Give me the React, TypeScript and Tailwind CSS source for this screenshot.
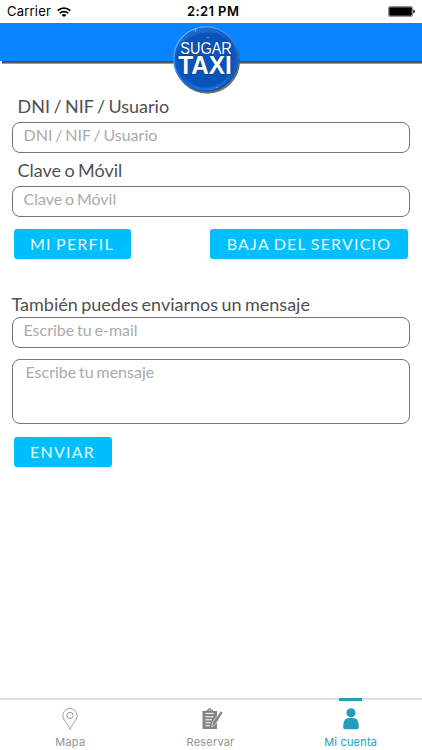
import React from 'react';

const StatusBar: React.FC = () => (
  <div className="relative flex h-[23px] items-center justify-between pl-[7px] pr-[7px] font-['Inter','Liberation_Sans',sans-serif] text-black">
    <div className="flex items-center gap-[6px]">
      <span className="w-[44px] whitespace-nowrap text-[13px] leading-[23px] tracking-[0.2px]">Carrier</span>
      <svg width="14" height="10" viewBox="0 0 14 10" fill="none" stroke="#000" strokeWidth="1.8">
        <path d="M0.7 3.7 C4.3 0.3 9.7 0.3 13.3 3.7" />
        <path d="M2.8 6.2 C5.1 4.1 8.9 4.1 11.2 6.2" />
        <path d="M4.6 8 C6 6.7 8 6.7 9.4 8 L7 10 Z" fill="#000" stroke="none" />
      </svg>
    </div>
    <span className="absolute left-[187px] whitespace-nowrap text-[13px] font-semibold leading-[23px] tracking-[0.4px]">2:21 PM</span>
    <svg width="27" height="11" viewBox="0 0 27 11">
      <rect x="0.4" y="0.4" width="24.2" height="10.2" rx="1.8" fill="#fff" stroke="#555" strokeWidth="0.7" />
      <rect x="1.2" y="1.2" width="22.6" height="8.6" rx="1" fill="#000" />
      <path d="M25.4 3.6 Q26.9 4 26.9 5.5 Q26.9 7 25.4 7.4 Z" fill="#000" />
    </svg>
  </div>
);

const Logo: React.FC = () => (
  <svg className="absolute left-[172px] top-[2px]" width="70" height="72" viewBox="0 0 70 72">
    <defs>
      <radialGradient id="ball" cx="0.5" cy="0.5" r="0.5">
        <stop offset="0" stopColor="#0755bc" />
        <stop offset="0.82" stopColor="#0753b8" />
        <stop offset="0.94" stopColor="#0b5bc8" />
        <stop offset="1" stopColor="#1773dc" />
      </radialGradient>
      <linearGradient id="rim" x1="0.1" y1="0" x2="0.75" y2="1">
        <stop offset="0" stopColor="#79baf8" />
        <stop offset="0.45" stopColor="#3b8ae2" />
        <stop offset="1" stopColor="#0a458f" />
      </linearGradient>
    </defs>
    <circle cx="35.4" cy="36.2" r="32.6" fill="#55585c" opacity="0.85" />
    <circle cx="34" cy="34" r="32.2" fill="url(#ball)" stroke="url(#rim)" strokeWidth="1.3" />
    <path d="M6 22 C14 3 39 -4 55 13 C43 5 24 4 6 22Z" fill="#5aa8f4" opacity="0.2" />
    <path d="M12 53 C27 69 49 64 59 48 C50 68 26 72 12 53Z" fill="#3397f7" opacity="0.35" />
    <path d="M21 5h5M23.5 3v4M34.5 12.5h3M44 62.5h2" stroke="#a9d7ff" strokeWidth="0.7" opacity="0.6" />
    <text x="8.3" y="28.9" textLength="51.5" lengthAdjust="spacingAndGlyphs" fontFamily="Liberation Sans, sans-serif" fontSize="15.8" fill="#fff" stroke="#15366f" strokeWidth="0.5" paintOrder="stroke">SUGAR</text>
    <text x="6.2" y="49.2" textLength="53.6" lengthAdjust="spacingAndGlyphs" fontFamily="Liberation Sans, sans-serif" fontWeight="bold" fontSize="26" fill="#fff" stroke="#15366f" strokeWidth="0.8" paintOrder="stroke">TAXI</text>
  </svg>
);

const Header: React.FC = () => (
  <header className="relative h-[41px]">
    <div className="h-[38px] bg-[#0984ff]" />
    <div className="ml-[2px] h-[3px] bg-linear-to-b from-[#35485d] via-[#5b5b5b] to-[#bbbbbb]" />
    <Logo />
  </header>
);

const inputClass =
  'block h-[31px] w-full rounded-[8px] border border-[#747474] bg-white px-[11px] pb-[6px] text-[16px] [word-spacing:-1.3px] text-[#555] outline-none placeholder:text-[#aaa] placeholder:opacity-100';

const buttonClass =
  'h-[30px] rounded-[3px] bg-[#00bfff] pb-px text-center text-[16px] tracking-[1.2px] [word-spacing:-1px] text-[#e3faff]';

const AccountForm: React.FC = () => (
  <main className="h-[634px] pl-[11.5px] pr-[12px] pt-[30px] font-['Lato',sans-serif] text-[#505050] [word-spacing:-1.2px]">
    <label className="block h-[28px] pl-[6px] text-[18px] leading-[24px]">DNI / NIF / Usuario</label>
    <input className={inputClass} placeholder="DNI / NIF / Usuario" />
    <label className="mt-[5px] block h-[28px] pl-[6px] text-[18px] leading-[24px]">Clave o Móvil</label>
    <input className={inputClass} placeholder="Clave o Móvil" />

    <div className="mt-[12px] flex justify-between px-[2px]">
      <button className={`${buttonClass} w-[117px]`}>MI PERFIL</button>
      <button className={`${buttonClass} w-[198px]`}>BAJA DEL SERVICIO</button>
    </div>

    <p className="mt-[33px] h-[25px] whitespace-nowrap text-[18px] leading-[24px]">También puedes enviarnos un mensaje</p>
    <input className={inputClass} placeholder="Escribe tu e-mail" />
    <textarea
      className="mt-[11px] block h-[65px] w-full resize-none rounded-[8px] border border-[#747474] bg-white px-[13px] text-[16px] leading-[24px] [word-spacing:-1.3px] outline-none placeholder:text-[#aaa] placeholder:opacity-100"
      placeholder="Escribe tu mensaje"
    />
    <button className={`${buttonClass} mt-[13px] ml-[2px] w-[98px]`}>ENVIAR</button>
  </main>
);

const TabBar: React.FC = () => (
  <nav className="grid h-[52px] grid-cols-3 border-t-2 border-[#dedede] font-['Inter','Liberation_Sans',sans-serif] text-[11px] tracking-[0.2px] text-[#929292]">
    <div className="flex flex-col items-center pt-[8px]">
      <svg width="16" height="22" viewBox="0 0 16 22" fill="none" stroke="#929292" strokeWidth="0.9">
        <path d="M8 21.3 C6.6 16.8 0.9 12.3 0.9 7.4 A7.1 6.9 0 0 1 15.1 7.4 C15.1 12.3 9.4 16.8 8 21.3Z" />
        <circle cx="8" cy="7.4" r="3.1" />
      </svg>
      <span className="mt-[4px] leading-[16px]">Mapa</span>
    </div>
    <div className="flex flex-col items-center pr-px pt-[8px]">
      <svg className="ml-[5px]" width="21" height="22" viewBox="0 0 21 22">
        <path d="M0.5 3 H4 Q4.4 1.8 5.8 1.8 Q6.2 0 7.6 0 Q9 0 9.4 1.8 Q10.8 1.8 11.2 3 H15 V21 H0.5Z" fill="#858585" />
        <path d="M3.6 5.4H11.8M3.4 8.8H11.6M3.4 11.8H9.8M3.4 14.8H8.6M3.4 17.8H7.8" stroke="#fff" strokeWidth="1" />
        <path d="M18.8 3 L11 13.8 L9.6 19 L14 16 L21 4.6 Z" fill="#858585" stroke="#fff" strokeWidth="0.6" />
        <circle cx="7.6" cy="1.9" r="0.6" fill="#fff" />
      </svg>
      <span className="mt-[4px] leading-[16px]">Reservar</span>
    </div>
    <div className="relative flex flex-col items-center pr-[2px] pt-[8px] text-[#239dbd]">
      <div className="absolute -top-[2px] left-[57.5px] h-[3px] w-[23px] bg-[#239dbd]" />
      <svg width="16" height="22" viewBox="0 0 16 22" fill="currentColor">
        <ellipse cx="8" cy="4.7" rx="4.6" ry="4.5" />
        <path d="M3 10.8 Q8 8.9 13 10.8 C15 11.7 15.8 15.7 15.8 19.2 Q15.8 21.2 14 21.2 H2 Q0.2 21.2 0.2 19.2 C0.2 15.7 1 11.7 3 10.8Z" />
      </svg>
      <span className="mt-[4px] leading-[16px]">Mi cuenta</span>
    </div>
  </nav>
);

const App: React.FC = () => {
  return (
    <div className="h-[750px] w-[422px] overflow-hidden bg-white">
      <StatusBar />
      <Header />
      <AccountForm />
      <TabBar />
    </div>
  );
};

export default App;
